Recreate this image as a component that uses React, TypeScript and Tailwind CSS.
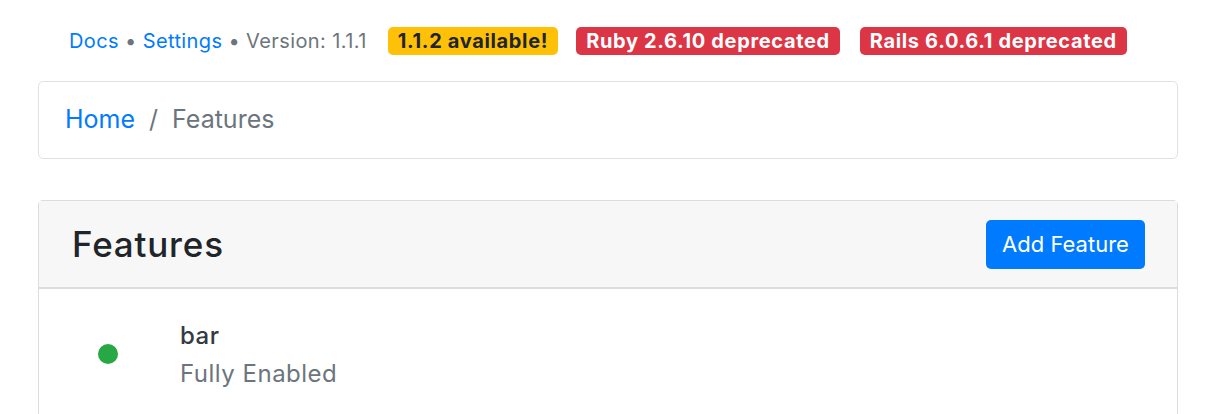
import React from "react";

function Badge({ children, tone, className = "" }: { children: React.ReactNode; tone: "warn" | "danger"; className?: string }) {
  const cls =
    tone === "warn"
      ? "bg-[#ffc107] text-[#212529]"
      : "bg-[#dc3545] text-white";
  return (
    <span className={`inline-flex h-[28px] items-center rounded-[5px] px-[10px] text-[20px] font-bold leading-none tracking-[0.65px] ${cls} ${className}`}>
      {children}
    </span>
  );
}

export default function App() {
  return (
    <div className="min-h-[414px] bg-white font-['Inter','Liberation_Sans',sans-serif] text-[#212529]">
      <div className="ml-[38px] w-[1140px]">
        <nav className="flex h-[55px] items-end pl-[31px]">
          <div className="flex h-[28px] items-center text-[20px] leading-none tracking-[0.4px]">
            <a className="text-[#007bff]">Docs</a>
            <span className="mx-[6px] text-[#6c757d]">•</span>
            <a className="text-[#007bff]">Settings</a>
            <span className="mx-[6px] text-[#6c757d]">•</span>
            <span className="text-[#6c757d]">Version: 1.1.1</span>
            <div className="ml-[21px] flex gap-[18px]">
              <Badge tone="warn">1.1.2 available!</Badge>
              <Badge tone="danger">Ruby 2.6.10 deprecated</Badge>
              <Badge tone="danger" className="ml-[2px]">Rails 6.0.6.1 deprecated</Badge>
            </div>
          </div>
        </nav>

        <div className="mt-[26px] flex h-[78px] items-center rounded-[5px] border border-[#dee2e6] px-[26px] text-[25px]">
          <a className="text-[#007bff]">Home</a>
          <span className="mx-[14px] text-[#6c757d]">/</span>
          <span className="text-[#6c757d]">Features</span>
        </div>

        <div className="mt-[41px] rounded-t-[5px] border border-b-0 border-[#dcdcdc]">
          <div className="flex h-[88px] items-center justify-between border-b-2 border-[#dcdcdc] bg-[#f7f7f7] pl-[33px] pr-[32px]">
            <h1 className="text-[35px] font-medium tracking-[0.8px]">Features</h1>
            <button className="h-[49px] w-[159px] rounded-[5px] bg-[#007bff] text-[22px] text-white">
              Add Feature
            </button>
          </div>
          <div className="flex h-[130px] items-start">
            <div className="flex w-[137px] justify-center pt-[55px]">
              <span className="h-[20px] w-[20px] rounded-full bg-[#28a745]" />
            </div>
            <div className="ml-[4px] pt-[31px]">
              <div className="text-[24px] font-medium leading-[32px] tracking-[0.5px] text-[#343a40]">bar</div>
              <div className="text-[24px] leading-[44px] tracking-[0.5px] text-[#6c757d]">Fully Enabled</div>
            </div>
          </div>
        </div>
      </div>
    </div>
  );
}
